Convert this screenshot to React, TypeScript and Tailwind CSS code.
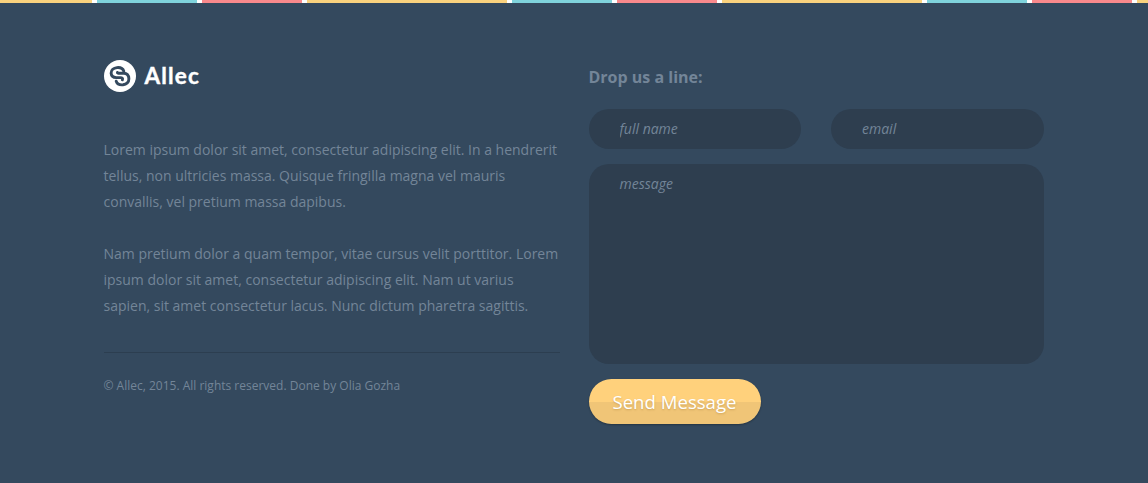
const field =
  "block bg-[#2e3e4f] text-[14px] italic text-[#738598] placeholder:text-[#738598] placeholder:opacity-100 outline-none";

function Logo() {
  return (
    <div className="flex h-8 items-center">
      <svg width="32" height="32" viewBox="0 0 32 32" fill="none">
        <circle cx="16" cy="16" r="16" fill="#fff" />
        <g stroke="#34495e" strokeWidth="2.9" strokeLinecap="round" strokeLinejoin="round">
          <path d="M19.8 11.2C19 8.8 16.2 7.3 13 7.6C9.6 8 7 10.2 7.1 13.2C7.3 16 9.4 17.6 12.2 17.6H16.4C18.2 17.6 19 18.6 18.4 19.8" />
          <path d="M12.2 21.2C13 23.6 15.8 25.1 19 24.8C22.4 24.4 25 22 24.9 18.8C24.7 15.4 22.6 13.3 19.8 13.3H16C14.2 13.3 13.2 13 13.4 12.4" />
        </g>
      </svg>
      <span className="-mt-px ml-[9px] font-['Lato'] text-[22.5px] font-bold leading-8 tracking-[1.15px] text-white [-webkit-text-stroke:0.4px_#fff]">Allec</span>
    </div>
  );
}

export default function App() {
  return (
    <footer className="h-[483px] overflow-hidden bg-[#34495e] font-['Open_Sans',sans-serif] text-[14px] text-[#738598]">
      <div className="-ml-[108px] h-[3px] bg-[repeating-linear-gradient(90deg,#fad27e_0_200px,#fff_200px_205px,#7fd3dc_205px_305px,#fff_305px_310px,#f9898c_310px_410px,#fff_410px_415px)]" />
      <div className="flex gap-[29px] pl-[103.5px]">
        <div className="w-[456px] pt-[57px]">
          <Logo />
          <div className="mt-[45px] whitespace-nowrap leading-[26px]">
            <p>
              Lorem ipsum dolor sit amet, consectetur adipiscing elit. In a hendrerit
              <br />
              tellus, non ultricies massa. Quisque fringilla magna vel mauris
              <br />
              convallis, vel pretium massa dapibus.
            </p>
            <p className="mt-[26px]">
              Nam pretium dolor a quam tempor, vitae cursus velit porttitor. Lorem
              <br />
              ipsum dolor sit amet, consectetur adipiscing elit. Nam ut varius
              <br />
              sapien, sit amet consectetur lacus. Nunc dictum pharetra sagittis.
            </p>
          </div>
          <div className="mt-[33px] border-t border-[#2c3e50] pt-5 text-[12px] leading-[26px]">
            © Allec, 2015. All rights reserved. Done by Olia Gozha
          </div>
        </div>
        <form className="w-[455.5px] pt-[61px]">
          <h2 className="text-[16px] font-bold leading-[26px]">Drop us a line:</h2>
          <div className="mt-[19px] flex gap-[30px]">
            <input placeholder="full name" className={`${field} h-10 w-[212.5px] rounded-[20px] px-[31px] pb-[2px]`} />
            <input placeholder="email" className={`${field} h-10 w-[213px] rounded-[20px] px-[31px] pb-[2px]`} />
          </div>
          <textarea
            placeholder="message"
            className={`${field} mt-[15px] h-[200px] w-full resize-none rounded-[20px] px-[31px] py-[9px]`}
          />
          <button
            type="button"
            className="mt-[15px] h-[45px] w-[172px] whitespace-nowrap rounded-full bg-[linear-gradient(#ffd17c_0_51%,#f0c577_51%)] text-[18.6px] text-white shadow-[0_1px_2px_rgba(0,0,0,0.3)] [text-shadow:0_1px_2px_rgba(130,90,20,0.3)]"
          >
            Send Message
          </button>
        </form>
      </div>
    </footer>
  );
}
